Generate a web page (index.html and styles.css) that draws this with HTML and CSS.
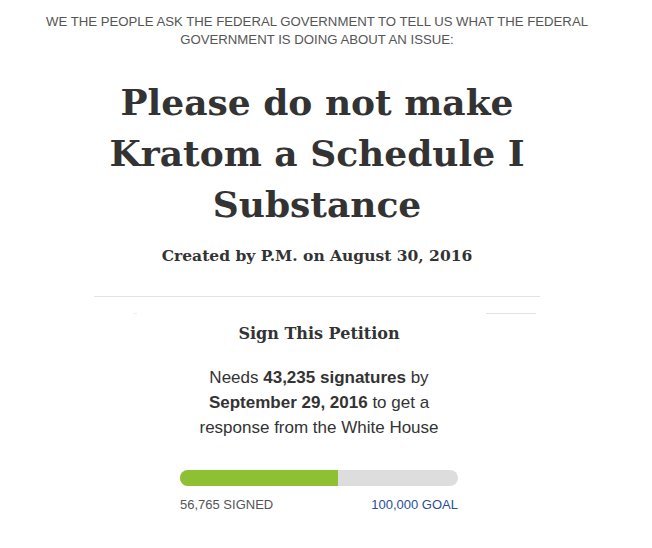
FILE: index.html
```html
<!DOCTYPE html>
<html lang="en">
<head>
  <meta charset="UTF-8" />
  <title>Please do not make Kratom a Schedule I Substance</title>
  <link rel="stylesheet" href="styles.css">
</head>
<body>
  <div class="page">
    <p class="intro">We the people ask the federal government to tell us what the federal government is doing about an issue:</p>
    <h1 class="title">Please do not make Kratom a Schedule I Substance</h1>
    <h4 class="byline">Created by P.M. on August 30, 2016</h4>
    <hr class="divider">

    <div class="sign-edge">
      <span class="edge-left"></span>
      <span class="edge-right"></span>
    </div>

    <div class="sign-box">
      <h3>Sign This Petition</h3>
      <p class="needs">Needs <strong>43,235 signatures</strong> by <strong>September 29, 2016</strong> to get a response from the White House</p>
      <div class="progress">
        <div class="progress-fill" style="width: 57%;"></div>
      </div>
      <div class="progress-labels">
        <span class="signed">56,765 Signed</span>
        <span class="goal">100,000 Goal</span>
      </div>
    </div>
  </div>
</body>
</html>
```

FILE: styles.css
```css
body {
  margin: 0;
  background: #fff;
  color: #333;
  font-family: "Liberation Sans", Arial, sans-serif;
}

.page {
  width: 634px;
  padding-top: 13px;
  text-align: center;
}

.intro {
  margin: 0 auto;
  width: 580px;
  font-size: 13.2px;
  line-height: 18px;
  text-transform: uppercase;
  color: #555;
}

.title {
  margin: 28px auto 0;
  width: 440px;
  font-family: "DejaVu Serif", Georgia, serif;
  font-size: 36px;
  line-height: 51px;
  font-weight: bold;
  color: #333;
}

.byline {
  margin: 16px 0 0;
  font-family: "DejaVu Serif", Georgia, serif;
  font-size: 15.5px;
  font-weight: bold;
}

.divider {
  width: 446px;
  margin: 31px auto 0;
  border: none;
  border-top: 1px solid #e3e3e3;
}

.sign-edge {
  display: flex;
  justify-content: space-between;
  width: 402px;
  margin: 16px auto 0;
  padding-left: 36px;
  height: 1px;
}

.edge-left {
  width: 3px;
  border-top: 1px solid #eee;
}

.edge-right {
  width: 50px;
  border-top: 1px solid #e3e3e3;
}

.sign-box {
  width: 278px;
  margin: 0 auto;
  padding-left: 4px;
}

.sign-box h3 {
  margin: 10px 0 0;
  font-family: "DejaVu Serif", Georgia, serif;
  font-size: 16px;
  font-weight: bold;
}

.needs {
  margin: 22px auto 0;
  width: 250px;
  font-size: 17px;
  line-height: 25px;
}

.progress {
  margin-top: 30px;
  height: 16px;
  border-radius: 8px;
  background: #ddd;
  overflow: hidden;
}

.progress-fill {
  height: 100%;
  background: #8dc033;
}

.progress-labels {
  display: flex;
  justify-content: space-between;
  margin-top: 11px;
  font-size: 13px;
  text-transform: uppercase;
}

.signed {
  color: #555;
}

.goal {
  color: #2a4e96;
}
```
